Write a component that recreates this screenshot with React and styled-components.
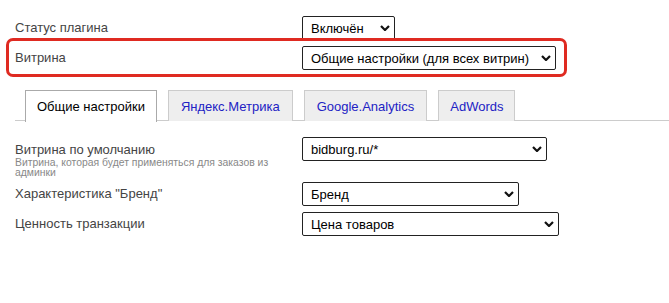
import React from 'react';
import styled, { createGlobalStyle } from 'styled-components';

const GlobalStyle = createGlobalStyle`
  html, body {
    margin: 0;
    padding: 0;
    background: #fff;
  }
  body {
    font-family: Arial, "Liberation Sans", sans-serif;
    font-size: 13px;
    color: #444;
  }
`;

const Page = styled.div`
  padding: 16px 0 0 15px;
  width: 654px;
`;

const Row = styled.div`
  position: relative;
  display: flex;
  align-items: ${({ top }) => (top ? 'flex-start' : 'center')};
  margin-bottom: ${({ gap }) => gap ?? 6}px;
`;

const Label = styled.div`
  width: 287px;
  flex-shrink: 0;
  color: #444;
  font-size: 13px;
  line-height: 16px;
  padding-top: ${({ top }) => (top ? 5 : 0)}px;
`;

const Hint = styled.div`
  width: 280px;
  color: #888;
  font-size: 10.4px;
  line-height: 10px;
`;

const Highlight = styled.div`
  position: absolute;
  left: -9px;
  top: -8px;
  width: 561px;
  height: 39px;
  box-sizing: border-box;
  border: 3px solid #df2a21;
  border-radius: 7px;
  pointer-events: none;
`;

const SelectWrap = styled.div`
  position: relative;
  width: ${({ w }) => w}px;
  height: 24px;
`;

const Select = styled.select`
  appearance: none;
  -webkit-appearance: none;
  width: 100%;
  height: 100%;
  box-sizing: border-box;
  border: 1px solid #222;
  border-radius: 2px;
  background: #fff;
  color: #000;
  font-family: Arial, "Liberation Sans", sans-serif;
  font-size: 13px;
  padding: 0 24px 0 8px;
  margin: 0;
  outline: none;
`;

const Chevron = styled.svg`
  position: absolute;
  right: 5px;
  top: 9px;
  width: 10px;
  height: 6px;
  pointer-events: none;
`;

const Tabs = styled.div`
  display: flex;
  gap: 11px;
  margin: 20px 0 16px 0;
  padding-left: 10px;
  border-bottom: 1px solid #ccc;
  height: 31px;
  box-sizing: border-box;
`;

const Tab = styled.div`
  box-sizing: border-box;
  padding: 0 ${({ pad }) => pad ?? 11}px;
  display: flex;
  align-items: center;
  font-size: 13px;
  border: 1px solid ${({ active }) => (active ? '#aaa' : '#ccc')};
  border-bottom: none;
  background: ${({ active }) => (active ? '#fff' : '#eee')};
  color: ${({ active }) => (active ? '#000' : '#2222c4')};
  height: ${({ active }) => (active ? 32 : 31)}px;
  cursor: pointer;
`;

function Dropdown({ width, value }) {
  return (
    <SelectWrap w={width}>
      <Select defaultValue={value}>
        <option>{value}</option>
      </Select>
      <Chevron viewBox="0 0 10 6">
        <path d="M1 1 L5 5 L9 1" fill="none" stroke="#111" strokeWidth="2.2" />
      </Chevron>
    </SelectWrap>
  );
}

export default function App() {
  return (
    <>
      <GlobalStyle />
      <Page>
        <Row>
          <Label>Статус плагина</Label>
          <Dropdown width={93} value="Включён" />
        </Row>
        <Row>
          <Label>Витрина</Label>
          <Dropdown width={254} value="Общие настройки (для всех витрин)" />
          <Highlight />
        </Row>
        <Tabs>
          <Tab active>Общие настройки</Tab>
          <Tab pad={12}>Яндекс.Метрика</Tab>
          <Tab pad={12}>Google.Analytics</Tab>
          <Tab>AdWords</Tab>
        </Tabs>
        <Row top gap={4}>
          <Label top>
            Витрина по умолчанию
            <Hint>Витрина, которая будет применяться для заказов из админки</Hint>
          </Label>
          <Dropdown width={245} value="bidburg.ru/*" />
        </Row>
        <Row>
          <Label>Характеристика "Бренд"</Label>
          <Dropdown width={217} value="Бренд" />
        </Row>
        <Row>
          <Label>Ценность транзакции</Label>
          <Dropdown width={257} value="Цена товаров" />
        </Row>
      </Page>
    </>
  );
}
